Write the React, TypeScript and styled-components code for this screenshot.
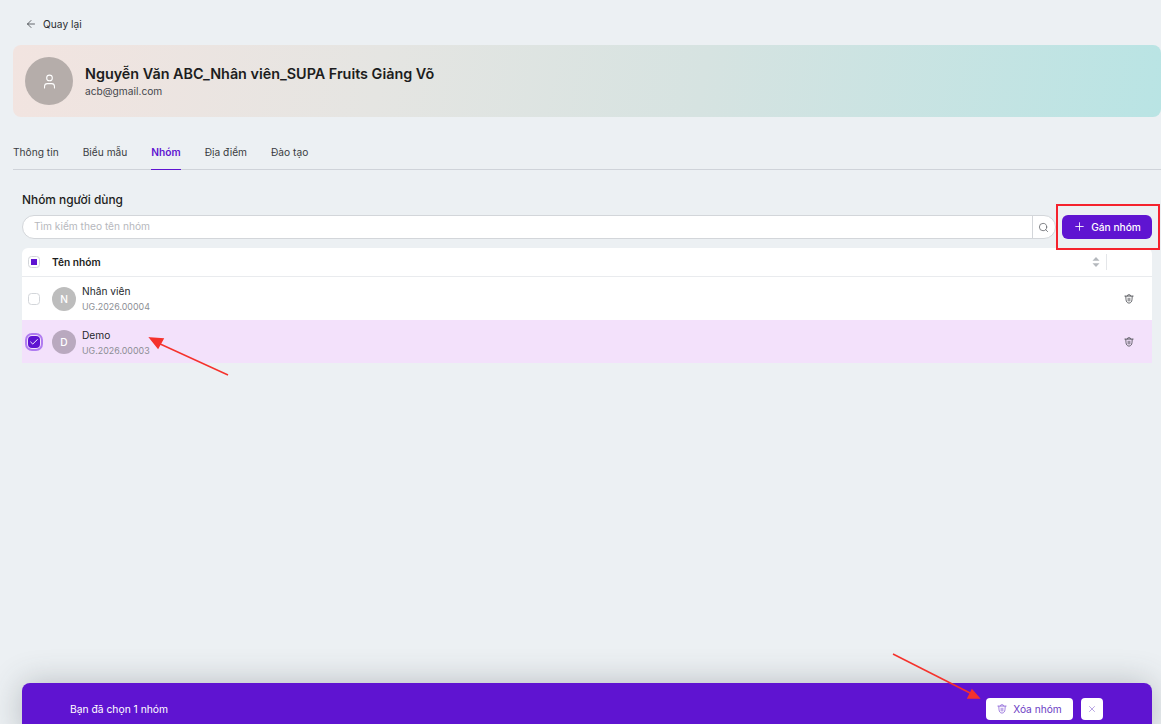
import React from 'react';
import styled, { createGlobalStyle } from 'styled-components';
import { ArrowLeft, Plus, Search, User, X, Check } from 'lucide-react';

const Global = createGlobalStyle`
html, body {
  margin: 0;
  height: 100%;
  overflow: hidden;
  background: #ecf0f3;
}
* { box-sizing: border-box; }
`;

const TrashIcon: React.FC<{ size?: number }> = ({ size = 12 }) => (
  <svg width={size} height={size} viewBox="0 0 12 12" fill="none" stroke="currentColor" strokeWidth="0.95" strokeLinecap="round" strokeLinejoin="round">
    <path d="M1 2.500h10" />
    <path d="M4.200 2.300 4.700 1h2.600l.5 1.300" />
    <path d="M2.200 2.700c0 3.500.3 5.700 1 6.700.6.900 1.700 1.400 2.800 1.600 1.100-.2 2.200-.7 2.800-1.600.7-1 1-3.200 1-6.700" />
    <path d="M5 5v3.400M7 5v3.400" />
  </svg>
);

const groups = [
  { letter: 'N', name: 'Nhân viên', code: 'UG.2026.00004', selected: false },
  { letter: 'D', name: 'Demo', code: 'UG.2026.00003', selected: true },
];

const tabs = ['Thông tin', 'Biểu mẫu', 'Nhóm', 'Địa điểm', 'Đào tạo'];

const App: React.FC = () => {
  return (
    <Page>
      <Global />
      <BackLink>
        <ArrowLeft size={12} strokeWidth={1.4} />
        <span>Quay lại</span>
      </BackLink>
      <ProfileCard>
        <ProfileAvatar>
          <User size={17} strokeWidth={1.5} />
        </ProfileAvatar>
        <div>
          <ProfileName>Nguyễn Văn ABC_Nhân viên_SUPA Fruits Giảng Võ</ProfileName>
          <ProfileEmail>acb@gmail.com</ProfileEmail>
        </div>
      </ProfileCard>
      <Tabs>
        {tabs.map((t) => (
          <Tab key={t} $active={t === 'Nhóm'}>{t}</Tab>
        ))}
      </Tabs>
      <Section>
        <SectionTitle>Nhóm người dùng</SectionTitle>
        <SearchRow>
          <SearchBox>
            <SearchInput placeholder="Tìm kiếm theo tên nhóm" readOnly />
            <SearchButton>
              <Search size={11} strokeWidth={1.7} />
            </SearchButton>
          </SearchBox>
          <AssignButton>
            <Plus size={13} strokeWidth={1.6} />
            Gán nhóm
          </AssignButton>
        </SearchRow>
        <Table>
          <HeaderRow>
            <CheckCell>
              <HeaderCheck><i /></HeaderCheck>
            </CheckCell>
            <HeaderLabel>Tên nhóm</HeaderLabel>
            <SortIcon viewBox="0 0 8 12" width="8" height="12">
              <path d="M4 1 7.500 4.800H.5z" fill="#b4b8bd" />
              <path d="M4 11 .5 7.200h7z" fill="#b4b8bd" />
            </SortIcon>
            <HeaderDivider />
          </HeaderRow>
          {groups.map((g) => (
            <Row key={g.code} $selected={g.selected}>
              <CheckCell>
                {g.selected ? (
                  <CheckedBox><Check size={10} strokeWidth={2.2} /></CheckedBox>
                ) : (
                  <EmptyBox />
                )}
              </CheckCell>
              <RowAvatar $selected={g.selected}>{g.letter}</RowAvatar>
              <RowText $selected={g.selected}>
                <RowName>{g.name}</RowName>
                <RowCode>{g.code}</RowCode>
              </RowText>
              <RowAction><TrashIcon size={10} /></RowAction>
            </Row>
          ))}
        </Table>
      </Section>

      <SelectionBar>
        <SelectionText>Bạn đã chọn 1 nhóm</SelectionText>
        <BarActions>
          <DeleteButton>
            <DeleteIcon><TrashIcon size={10} /></DeleteIcon>
            Xóa nhóm
          </DeleteButton>
          <CloseButton><X size={10} strokeWidth={1.5} /></CloseButton>
        </BarActions>
      </SelectionBar>

      <Highlight />
      <Annotation viewBox="0 0 1161 724" width="1161" height="724">
        <g stroke="#f5322c" strokeWidth="1.500" fill="#f5322c">
          <line x1="228" y1="375" x2="158" y2="343" />
          <path d="M150 338 163 339 158 348z" />
          <line x1="893" y1="654" x2="972" y2="694" />
          <path d="M979 698 968 698 972 690z" />
        </g>
      </Annotation>
    </Page>
  );
};

const Page = styled.div`
position: relative;
height: 724px;
overflow: hidden;
padding: 17px 0 0 13px;
background: #ecf0f3;
font-family: Inter, "Noto Sans", sans-serif;
color: #1c1d20;
`;

const BackLink = styled.div`
display: flex;
align-items: center;
gap: 6px;
height: 13px;
margin-left: 12px;
font-size: 10.2px;
color: #2a2c30;
`;

const ProfileCard = styled.div`
display: flex;
align-items: center;
gap: 12px;
height: 72px;
margin-top: 15px;
padding-left: 12px;
border-radius: 8px;
background: linear-gradient(100deg, #f2e4e0 0%, #e5e5e2 32%, #d6e3e1 60%, #b9e4e4 100%);
`;

const ProfileAvatar = styled.div`
display: flex;
align-items: center;
justify-content: center;
width: 48px;
height: 48px;
border-radius: 50%;
background: #b5adaa;
color: #fff;
`;

const ProfileName = styled.div`
font-size: 14.37px;
font-weight: 600;
line-height: 20px;
color: #1c1d20;
`;

const ProfileEmail = styled.div`
font-size: 10.2px;
line-height: 14px;
color: #44464c;
`;

const Tabs = styled.div`
display: flex;
gap: 24px;
height: 35px;
margin-top: 18px;
border-bottom: 1px solid #cfd3d9;
`;

const Tab = styled.div<{ $active?: boolean }>`
height: 35px;
padding-top: 10px;
font-size: 10.2px;
line-height: 14px;
font-weight: ${(p) => (p.$active ? 600 : 400)};
color: ${(p) => (p.$active ? '#5f14d1' : '#3a3c42')};
border-bottom: 1px solid ${(p) => (p.$active ? '#5f14d1' : 'transparent')};
`;

const Section = styled.div`
margin: 20px 9px 0 9px;
`;

const SectionTitle = styled.div`
font-size: 11.9px;
font-weight: 500;
line-height: 20px;
color: #1c1d20;
`;

const SearchRow = styled.div`
display: flex;
gap: 6px;
margin-top: 5px;
`;

const SearchBox = styled.div`
display: flex;
flex: 1;
height: 24px;
border: 1px solid #d3d6da;
border-radius: 12px;
background: #fff;
overflow: hidden;
`;

const SearchInput = styled.input`
flex: 1;
border: none;
outline: none;
padding: 0 12px 2px 11px;
background: transparent;
font-family: inherit;
font-size: 10.2px;
&::placeholder {
  color: #b6b8bd;
}
`;

const SearchButton = styled.div`
display: flex;
align-items: center;
justify-content: center;
width: 23px;
padding-right: 2px;
border-left: 1px solid #d3d6da;
color: #62656a;
`;

const AssignButton = styled.button`
display: flex;
align-items: center;
justify-content: center;
gap: 5px;
width: 90px;
height: 24px;
padding: 0 0 1px 0;
border: none;
border-radius: 6px;
background: #5f14d1;
color: #fff;
font-family: inherit;
font-size: 10.2px;
font-weight: 500;
`;

const Table = styled.div`
margin-top: 9px;
border-radius: 6px 6px 0 0;
overflow: hidden;
background: #fff;
`;

const HeaderRow = styled.div`
display: flex;
align-items: center;
height: 29px;
padding-right: 45px;
border-bottom: 1px solid #e9ebee;
`;

const CheckCell = styled.div`
display: flex;
align-items: center;
justify-content: center;
flex: none;
width: 24px;
margin-right: 6px;
`;

const HeaderCheck = styled.div`
display: flex;
align-items: center;
justify-content: center;
width: 12px;
height: 12px;
border: 1px solid #d3d6da;
border-radius: 3.500px;
background: #fff;
i {
  display: block;
  width: 6px;
  height: 6px;
  background: #5f14d1;
}
`;

const HeaderLabel = styled.div`
flex: 1;
font-size: 10.2px;
font-weight: 600;
color: #1c1d20;
`;

const SortIcon = styled.svg`
flex: none;
`;

const HeaderDivider = styled.div`
flex: none;
width: 1px;
height: 16px;
margin-left: 6px;
background: #e4e6e9;
`;

const Row = styled.div<{ $selected?: boolean }>`
display: flex;
align-items: center;
height: 43px;
background: ${(p) => (p.$selected ? '#f3e1fb' : '#fff')};
`;

const EmptyBox = styled.div`
width: 12px;
height: 12px;
border: 1px solid #d3d6da;
border-radius: 3.500px;
background: #fff;
`;

const CheckedBox = styled.div`
display: flex;
align-items: center;
justify-content: center;
width: 12px;
height: 12px;
border-radius: 4px;
background: #5f14d1;
color: #fff;
box-shadow: 0 0 0 1px #f3e1fb, 0 0 0 3px #b07cf0;
`;

const RowAvatar = styled.div<{ $selected?: boolean }>`
display: flex;
align-items: center;
justify-content: center;
flex: none;
width: 24px;
height: 24px;
border-radius: 50%;
margin-right: 6px;
background: ${(p) => (p.$selected ? '#b9a9bf' : '#bdbdbd')};
color: #fff;
font-size: 10.2px;
font-weight: 500;
`;

const RowText = styled.div<{ $selected?: boolean }>`
flex: 1;
padding-top: ${(p) => (p.$selected ? 2 : 0)}px;
`;

const RowName = styled.div`
font-size: 10.2px;
line-height: 15px;
color: #26282c;
`;

const RowCode = styled.div`
margin-top: 2px;
font-size: 8.9px;
line-height: 12px;
color: #8c8e94;
`;

const RowAction = styled.div`
display: flex;
justify-content: center;
flex: none;
width: 46px;
color: #44464c;
`;

const SelectionBar = styled.div`
position: absolute;
left: 22px;
top: 683px;
display: flex;
align-items: center;
justify-content: space-between;
width: 1130px;
height: 52px;
padding: 0 49px 0 48px;
border-radius: 8px 8px 0 0;
background: #5f14d1;
box-shadow: 0 0 32px rgba(60, 66, 74, 0.3);
`;

const SelectionText = styled.div`
font-size: 10.3px;
color: #fff;
`;

const BarActions = styled.div`
display: flex;
gap: 8px;
`;

const DeleteButton = styled.button`
display: flex;
align-items: center;
justify-content: center;
gap: 6px;
width: 87px;
height: 22px;
padding: 0;
border: none;
border-radius: 4px;
background: #fff;
color: #6c3bc4;
font-family: inherit;
font-size: 10.2px;
`;

const DeleteIcon = styled.span`
display: flex;
color: #8a62d6;
`;

const CloseButton = styled.button`
display: flex;
align-items: center;
justify-content: center;
width: 22px;
height: 22px;
padding: 0;
border: none;
border-radius: 4px;
background: #fff;
color: #8d6fd0;
`;

const Highlight = styled.div`
position: absolute;
left: 1056px;
top: 204px;
width: 104px;
height: 46px;
border: 2px solid #f5222d;
`;

const Annotation = styled.svg`
position: absolute;
left: 0;
top: 0;
pointer-events: none;
`;

export default App;
